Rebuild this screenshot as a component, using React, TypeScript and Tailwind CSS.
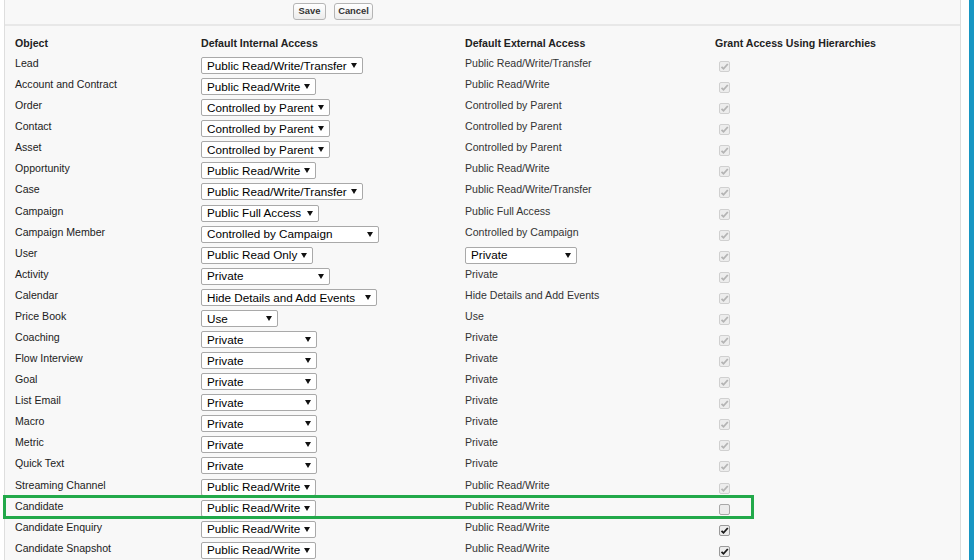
import { Fragment } from 'react'

type Check = 'locked' | 'off' | 'on'

interface Row {
    label: string
    internal: string
    internalW: string
    external: string
    externalW?: string
    check: Check
}

const rows: Row[] = [
    { label: 'Lead', internal: 'Public Read/Write/Transfer', internalW: 'w-[162px]', external: 'Public Read/Write/Transfer', check: 'locked' },
    { label: 'Account and Contract', internal: 'Public Read/Write', internalW: 'w-[115px]', external: 'Public Read/Write', check: 'locked' },
    { label: 'Order', internal: 'Controlled by Parent', internalW: 'w-[129px]', external: 'Controlled by Parent', check: 'locked' },
    { label: 'Contact', internal: 'Controlled by Parent', internalW: 'w-[129px]', external: 'Controlled by Parent', check: 'locked' },
    { label: 'Asset', internal: 'Controlled by Parent', internalW: 'w-[129px]', external: 'Controlled by Parent', check: 'locked' },
    { label: 'Opportunity', internal: 'Public Read/Write', internalW: 'w-[115px]', external: 'Public Read/Write', check: 'locked' },
    { label: 'Case', internal: 'Public Read/Write/Transfer', internalW: 'w-[162px]', external: 'Public Read/Write/Transfer', check: 'locked' },
    { label: 'Campaign', internal: 'Public Full Access', internalW: 'w-[118px]', external: 'Public Full Access', check: 'locked' },
    { label: 'Campaign Member', internal: 'Controlled by Campaign', internalW: 'w-[178px]', external: 'Controlled by Campaign', check: 'locked' },
    { label: 'User', internal: 'Public Read Only', internalW: 'w-[112px]', external: 'Private', externalW: 'w-[112px]', check: 'locked' },
    { label: 'Activity', internal: 'Private', internalW: 'w-[129px]', external: 'Private', check: 'locked' },
    { label: 'Calendar', internal: 'Hide Details and Add Events', internalW: 'w-[176px]', external: 'Hide Details and Add Events', check: 'locked' },
    { label: 'Price Book', internal: 'Use', internalW: 'w-[77px]', external: 'Use', check: 'locked' },
    { label: 'Coaching', internal: 'Private', internalW: 'w-[116px]', external: 'Private', check: 'locked' },
    { label: 'Flow Interview', internal: 'Private', internalW: 'w-[116px]', external: 'Private', check: 'locked' },
    { label: 'Goal', internal: 'Private', internalW: 'w-[116px]', external: 'Private', check: 'locked' },
    { label: 'List Email', internal: 'Private', internalW: 'w-[116px]', external: 'Private', check: 'locked' },
    { label: 'Macro', internal: 'Private', internalW: 'w-[116px]', external: 'Private', check: 'locked' },
    { label: 'Metric', internal: 'Private', internalW: 'w-[116px]', external: 'Private', check: 'locked' },
    { label: 'Quick Text', internal: 'Private', internalW: 'w-[116px]', external: 'Private', check: 'locked' },
    { label: 'Streaming Channel', internal: 'Public Read/Write', internalW: 'w-[115px]', external: 'Public Read/Write', check: 'locked' },
    { label: 'Candidate', internal: 'Public Read/Write', internalW: 'w-[115px]', external: 'Public Read/Write', check: 'off' },
    { label: 'Candidate Enquiry', internal: 'Public Read/Write', internalW: 'w-[115px]', external: 'Public Read/Write', check: 'on' },
    { label: 'Candidate Snapshot', internal: 'Public Read/Write', internalW: 'w-[115px]', external: 'Public Read/Write', check: 'on' },
]

function FakeSelect({ value, width }: { value: string; width: string }) {
    return (
        <div
            className={`mt-px flex h-[17px] ${width} items-center justify-between rounded-[2px] border border-[#a9a9a9] bg-white pl-[5px] pr-[5px] text-[11.7px] leading-none text-black`}
        >
            <span className="whitespace-nowrap">{value}</span>
            <svg width="6" height="5" viewBox="0 0 6 5" className="shrink-0">
                <polygon points="0,0 6,0 3,5" fill="#111" />
            </svg>
        </div>
    )
}

function Checkbox({ state }: { state: Check }) {
    const box =
        state === 'locked'
            ? 'border-[#d0d0d0] bg-[#ededed]'
            : state === 'off'
              ? 'border-[#a8a8a8] bg-[#ececec]'
              : 'border-[#9a9a9a] bg-[#ececec]'
    const tick = state === 'locked' ? '#b4b4b4' : '#1a1a1a'
    return (
        <div className={`ml-[4px] mt-[5px] flex h-[11px] w-[11px] items-center justify-center rounded-[2px] border ${box}`}>
            {state !== 'off' && (
                <svg width="9" height="9" viewBox="0 0 9 9">
                    <path d="M1.5 4.8 L3.5 6.8 L7.8 2" stroke={tick} strokeWidth="1.8" fill="none" />
                </svg>
            )}
        </div>
    )
}

export default function App() {
    return (
        <div className="flex h-[560px] w-[974px] overflow-hidden bg-white font-['Liberation_Sans',Arial,sans-serif]">
            <div className="w-[4px] bg-white" />
            <div className="w-[957px] border-x border-[#dedede] bg-[#f8f8f8]">
                <div className="flex h-[26px] items-start gap-[8px] border-b-2 border-[#e8e8e8] pl-[288px] pt-[3px]">
                    <button
                        type="button"
                        className="h-[17px] w-[33px] rounded-[3px] border border-[#b5b5b5] bg-gradient-to-b from-white to-[#ececec] text-[9.4px] font-bold text-[#333]"
                    >
                        Save
                    </button>
                    <button
                        type="button"
                        className="h-[17px] w-[39px] rounded-[3px] border border-[#b5b5b5] bg-gradient-to-b from-white to-[#ececec] text-[9.4px] font-bold text-[#333]"
                    >
                        Cancel
                    </button>
                </div>

                <div className="pl-[10px] pt-[10px]">
                    <div className="grid grid-cols-[186px_264px_250px_200px] text-[10.6px] font-bold leading-[14px] text-[#222]">
                        <div className="h-[20px]">Object</div>
                        <div>Default Internal Access</div>
                        <div>Default External Access</div>
                        <div>Grant Access Using Hierarchies</div>
                    </div>

                    {rows.map((r) => (
                        <Fragment key={r.label}>
                            <div className="relative grid h-[21.08px] grid-cols-[186px_264px_250px_200px] text-[10.6px] leading-[14px]">
                                <div className="text-[#222]">{r.label}</div>
                                <div>
                                    <FakeSelect value={r.internal} width={r.internalW} />
                                </div>
                                <div>
                                    {r.externalW ? (
                                        <FakeSelect value={r.external} width={r.externalW} />
                                    ) : (
                                        <span className="text-[#333]">{r.external}</span>
                                    )}
                                </div>
                                <div>
                                    <Checkbox state={r.check} />
                                </div>
                                {r.check === 'off' && (
                                    <div className="pointer-events-none absolute left-[-12px] top-[-4px] h-[24px] w-[751px] border-[3px] border-[#22a94a]" />
                                )}
                            </div>
                        </Fragment>
                    ))}
                </div>
            </div>
            <div className="w-[8px] bg-white" />
            <div className="w-[5px] bg-[#1796c3]" />
        </div>
    )
}
